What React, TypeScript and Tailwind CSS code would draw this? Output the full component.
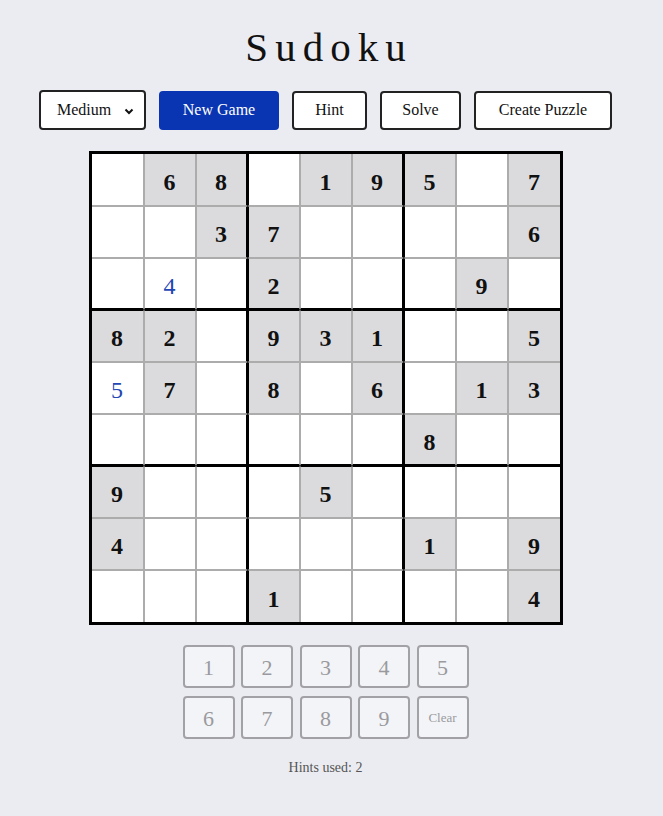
import React, { useState } from 'react';

const serif = { fontFamily: 'Georgia, "Liberation Serif", "DejaVu Serif", serif' };

// 0 = empty; negative = player-entered value
const startBoard: number[][] = [
  [0, 6, 8, 0, 1, 9, 5, 0, 7],
  [0, 0, 3, 7, 0, 0, 0, 0, 6],
  [0, -4, 0, 2, 0, 0, 0, 9, 0],
  [8, 2, 0, 9, 3, 1, 0, 0, 5],
  [-5, 7, 0, 8, 0, 6, 0, 1, 3],
  [0, 0, 0, 0, 0, 0, 8, 0, 0],
  [9, 0, 0, 0, 5, 0, 0, 0, 0],
  [4, 0, 0, 0, 0, 0, 1, 0, 9],
  [0, 0, 0, 1, 0, 0, 0, 0, 4],
];

function Cell({ value, row, col }: { value: number; row: number; col: number }) {
  const given = value > 0;
  const user = value < 0;
  const right = col === 2 || col === 5 ? 'border-r-[2px] border-r-black' : col === 8 ? 'border-r-0' : 'border-r border-r-[#acacac]';
  const left = col === 3 || col === 6 ? 'border-l border-l-black' : col === 0 ? 'border-l-0' : 'border-l border-l-[#acacac]';
  const bottom = row === 2 || row === 5 ? 'border-b-[2px] border-b-black' : row === 8 ? 'border-b-0' : 'border-b border-b-[#acacac]';
  const top = row === 3 || row === 6 ? 'border-t border-t-black' : row === 0 ? 'border-t-0' : 'border-t border-t-[#acacac]';
  return (
    <div
      className={`box-border flex items-center justify-center pt-[4px] ${right} ${left} ${top} ${bottom} ${
        given ? 'bg-[#dbdbde] font-bold text-[#111] text-[24px]' : 'bg-white'
      } ${user ? 'text-[#2446b4] text-[24px]' : ''}`}
    >
      {value !== 0 && Math.abs(value)}
    </div>
  );
}

export default function App() {
  const [board] = useState(startBoard);
  const [hints] = useState(2);

  return (
    <div className="min-h-[816px] w-full bg-[#ebecf1]" style={serif}>
      <div className="w-[651px] flex flex-col items-center">
        <h1 className="mt-[23px] pl-[7px] text-[41px] leading-[48px] tracking-[7px] text-[#111]">Sudoku</h1>

        <div className="mt-[19px] flex items-center gap-[13px] text-[16px] text-[#111]">
          <div className="w-[107px] h-[40px] box-border border-2 border-[#222] rounded-[4px] bg-white flex items-center justify-between pl-[16px] pr-[10px]">
            <span>Medium</span>
            <svg width="10" height="10" viewBox="0 0 10 10" className="mt-[1px]">
              <path d="M1.5 3.5 L5 7 L8.5 3.5" fill="none" stroke="#111" strokeWidth="2" />
            </svg>
          </div>
          <button className="w-[120px] h-[39px] rounded-[4px] bg-[#0a35b2] text-white">New Game</button>
          <button className="w-[75px] h-[39px] box-border border-2 border-[#222] rounded-[4px] bg-white">Hint</button>
          <button className="w-[81px] h-[39px] box-border border-2 border-[#222] rounded-[4px] bg-white">Solve</button>
          <button className="w-[138px] h-[39px] box-border border-2 border-[#222] rounded-[4px] bg-white">Create Puzzle</button>
        </div>

        <div className="mt-[21px] box-border border-[3px] border-black grid grid-cols-[repeat(9,52px)] grid-rows-[repeat(9,52px)] w-[474px] h-[474px]">
          {board.map((r, ri) => r.map((v, ci) => <Cell key={`${ri}-${ci}`} value={v} row={ri} col={ci} />))}
        </div>

        <div className="mt-[20px] grid grid-cols-[repeat(5,52px)] gap-x-[6.5px] gap-y-[8px] text-[#9a9a9e]">
          {[1, 2, 3, 4, 5, 6, 7, 8, 9].map(n => (
            <button
              key={n}
              className="h-[43px] box-border border-2 border-[#a2a2a6] rounded-[4px] bg-[#f3f4f7] text-[22px] pt-[2px]"
            >
              {n}
            </button>
          ))}
          <button className="h-[43px] box-border border-2 border-[#a2a2a6] rounded-[4px] bg-[#f3f4f7] text-[13px]">Clear</button>
        </div>

        <div className="mt-[18px] text-[14px] text-[#555]">Hints used: {hints}</div>
      </div>
    </div>
  );
}
